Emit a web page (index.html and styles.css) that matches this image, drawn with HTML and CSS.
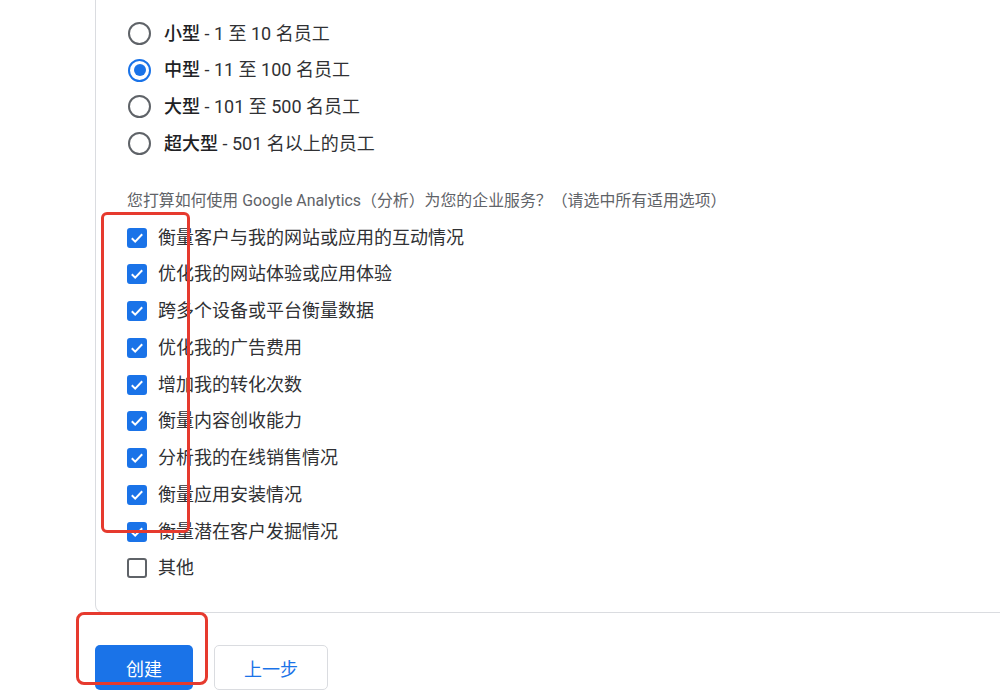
FILE: index.html
```html
<!DOCTYPE html>
<html lang="zh-CN">
<head>
<meta charset="utf-8">
<title>Google Analytics</title>
<link rel="stylesheet" href="styles.css">
</head>
<body>
<div class="page">
  <div class="card">
    <div class="radio-group">
      <label class="option"><span class="radio"></span><span class="label"><b>小型</b> - 1 至 10 名员工</span></label>
      <label class="option"><span class="radio checked"></span><span class="label"><b>中型</b> - 11 至 100 名员工</span></label>
      <label class="option"><span class="radio"></span><span class="label"><b>大型</b> - 101 至 500 名员工</span></label>
      <label class="option"><span class="radio"></span><span class="label"><b>超大型</b> - 501 名以上的员工</span></label>
    </div>
    <p class="question">您打算如何使用 Google Analytics（分析）为您的企业服务？（请选中所有适用选项）</p>
    <div class="check-group">
      <label class="option"><span class="check on"><svg viewBox="0 0 20 20"><path d="M4.8 10.2l3.4 3.4 7-7.4"/></svg></span><span class="label">衡量客户与我的网站或应用的互动情况</span></label>
      <label class="option"><span class="check on"><svg viewBox="0 0 20 20"><path d="M4.8 10.2l3.4 3.4 7-7.4"/></svg></span><span class="label">优化我的网站体验或应用体验</span></label>
      <label class="option"><span class="check on"><svg viewBox="0 0 20 20"><path d="M4.8 10.2l3.4 3.4 7-7.4"/></svg></span><span class="label">跨多个设备或平台衡量数据</span></label>
      <label class="option"><span class="check on"><svg viewBox="0 0 20 20"><path d="M4.8 10.2l3.4 3.4 7-7.4"/></svg></span><span class="label">优化我的广告费用</span></label>
      <label class="option"><span class="check on"><svg viewBox="0 0 20 20"><path d="M4.8 10.2l3.4 3.4 7-7.4"/></svg></span><span class="label">增加我的转化次数</span></label>
      <label class="option"><span class="check on"><svg viewBox="0 0 20 20"><path d="M4.8 10.2l3.4 3.4 7-7.4"/></svg></span><span class="label">衡量内容创收能力</span></label>
      <label class="option"><span class="check on"><svg viewBox="0 0 20 20"><path d="M4.8 10.2l3.4 3.4 7-7.4"/></svg></span><span class="label">分析我的在线销售情况</span></label>
      <label class="option"><span class="check on"><svg viewBox="0 0 20 20"><path d="M4.8 10.2l3.4 3.4 7-7.4"/></svg></span><span class="label">衡量应用安装情况</span></label>
      <label class="option"><span class="check on"><svg viewBox="0 0 20 20"><path d="M4.8 10.2l3.4 3.4 7-7.4"/></svg></span><span class="label">衡量潜在客户发掘情况</span></label>
      <label class="option"><span class="check"></span><span class="label">其他</span></label>
    </div>
  </div>
  <div class="actions">
    <button class="btn primary">创建</button>
    <button class="btn secondary">上一步</button>
  </div>
  <div class="annot annot-checks"></div>
  <div class="annot annot-create"></div>
</div>
</body>
</html>
```

FILE: styles.css
```css
html, body {
  margin: 0;
  padding: 0;
  background: #ffffff;
  overflow: hidden;
}
body {
  width: 1000px;
  height: 692px;
  font-family: Roboto, "Noto Sans CJK SC", sans-serif;
  color: #303134;
}
.page {
  position: relative;
  width: 1000px;
  height: 692px;
  overflow: hidden;
}
.card {
  box-sizing: border-box;
  margin-left: 95px;
  width: 980px;
  padding: 15.2px 0 25.4px 0;
  border: 1px solid #dadce0;
  border-top: none;
  border-radius: 0 0 8px 8px;
  background: #fff;
}
.radio-group {
  display: flex;
  flex-direction: column;
  padding-left: 32px;
}
.option {
  display: flex;
  align-items: center;
  height: 36.7px;
  font-size: 18px;
  line-height: 24px;
}
.radio-group .option { gap: 13px; }
.check-group .option { gap: 11px; height: 36.78px; }
.label b { font-weight: 500; color: #202124; }
.radio {
  box-sizing: border-box;
  width: 23px;
  height: 23px;
  border: 2px solid #5f6368;
  border-radius: 50%;
  display: flex;
  align-items: center;
  justify-content: center;
  flex: none;
}
.radio.checked { border-color: #1a73e8; }
.radio.checked::after {
  content: "";
  width: 12px;
  height: 12px;
  border-radius: 50%;
  background: #1a73e8;
}
.question {
  margin: 27.7px 0 7.6px 0;
  padding-left: 31px;
  font-size: 15.9px;
  line-height: 22px;
  color: #5f6368;
}
.check-group {
  display: flex;
  flex-direction: column;
  padding-left: 31px;
}
.check {
  box-sizing: border-box;
  width: 20px;
  height: 20px;
  border: 2px solid #5f6368;
  border-radius: 3px;
  flex: none;
  display: flex;
}
.check.on {
  background: #1a73e8;
  border-color: #1a73e8;
}
.check svg {
  width: 20px;
  height: 20px;
  margin: -2px;
  fill: none;
  stroke: #fff;
  stroke-width: 2;
}
.actions {
  display: flex;
  gap: 21px;
  margin: 32px 0 0 95px;
}
.btn {
  box-sizing: border-box;
  height: 45px;
  font-family: Roboto, "Noto Sans CJK SC", sans-serif;
  font-size: 18px;
  border-radius: 5px;
  padding: 0;
}
.btn.primary {
  width: 98px;
  background: #1a73e8;
  color: #fff;
  border: none;
}
.btn.secondary {
  width: 114px;
  background: #fff;
  color: #1a73e8;
  border: 1px solid #dadce0;
}
.annot {
  position: absolute;
  box-sizing: border-box;
  border: 3px solid #e63a2e;
  border-radius: 6px;
  pointer-events: none;
}
.annot-checks {
  left: 101px;
  top: 212px;
  width: 89px;
  height: 321px;
}
.annot-create {
  left: 76px;
  top: 612px;
  width: 132px;
  height: 73px;
  border-radius: 8px;
}
```
